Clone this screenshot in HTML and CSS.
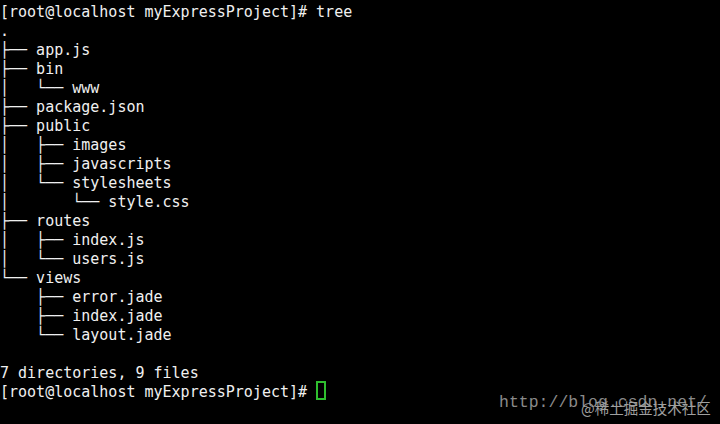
FILE: index.html
```html
<!DOCTYPE html>
<html>
<head>
<meta charset="utf-8">
<link rel="stylesheet" href="styles.css">
</head>
<body>
<div class="term">
<pre class="out">[root@localhost myExpressProject]# tree
.
├── app.js
├── bin
│   └── www
├── package.json
├── public
│   ├── images
│   ├── javascripts
│   └── stylesheets
│       └── style.css
├── routes
│   ├── index.js
│   └── users.js
└── views
    ├── error.jade
    ├── index.jade
    └── layout.jade

7 directories, 9 files
[root@localhost myExpressProject]# <span class="cursor"></span></pre>
<div class="wm">
<span class="wm-url">http://blog.csdn.net/</span>
<span class="wm-cn">@稀土掘金技术社区</span>
</div>
</div>
</body>
</html>
```
FILE: styles.css
```css
html, body {
  margin: 0;
  padding: 0;
  background: #000;
}
.term {
  position: relative;
  width: 720px;
  height: 424px;
  background: #000;
  overflow: hidden;
}
.out {
  margin: 0;
  padding: 3px 0 0 0;
  font-family: "DejaVu Sans Mono", monospace;
  font-size: 15px;
  line-height: 19px;
  color: #f0f0f0;
}
.cursor {
  display: inline-block;
  width: 6px;
  height: 15px;
  border: 2px solid #2fbf2f;
  vertical-align: top;
  position: relative;
  top: -2px;
}
.wm {
  position: absolute;
  left: 499px;
  top: 393px;
  width: 221px;
  height: 26px;
}
.wm-url {
  position: absolute;
  left: 0;
  top: 0;
  font-family: "Liberation Mono", monospace;
  font-size: 16.5px;
  color: #8a8a8a;
  white-space: nowrap;
}
.wm-cn {
  position: absolute;
  left: 82px;
  top: 4px;
  font-family: "Noto Sans CJK SC", sans-serif;
  font-size: 14.5px;
  color: #a0a0a0;
  white-space: nowrap;
}
```
